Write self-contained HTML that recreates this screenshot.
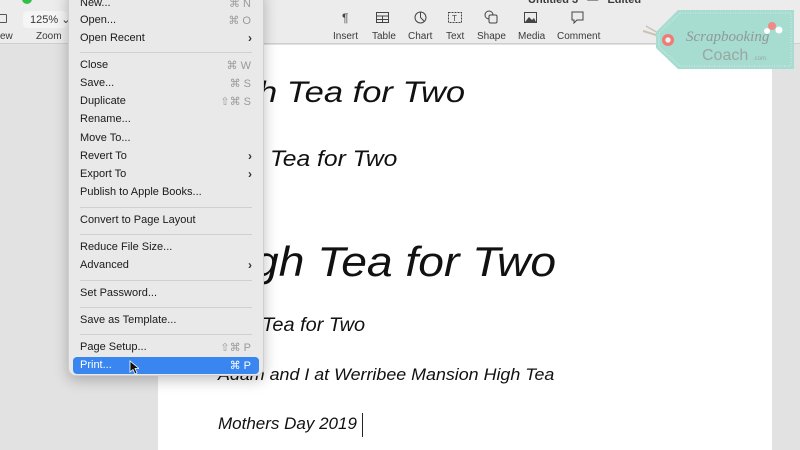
<!DOCTYPE html>
<html><head><meta charset="utf-8"><style>
*{margin:0;padding:0;box-sizing:border-box}
body{width:800px;height:450px;overflow:hidden;position:relative;background:#e2e2e2;font-family:"Liberation Sans",sans-serif}
.tb{position:absolute;left:0;top:0;width:800px;height:44px;background:#ececec;border-bottom:1px solid #cfcfcf}
.tl{position:absolute;font-size:10px;color:#3a3a3a}
.ic{position:absolute;font-size:12px;color:#444}
.page{position:absolute;left:158px;top:45px;width:614px;height:405px;background:#fff}
.hw{position:absolute;white-space:nowrap;font-style:italic;color:#111;transform-origin:left center;font-family:"Liberation Sans",sans-serif}
.menu{position:absolute;left:68px;top:-11px;width:196px;height:387px;background:#e9e9ea;border-radius:8px;box-shadow:0 4px 14px rgba(0,0,0,.25);border:1px solid #cfcfcf}
.it{position:absolute;left:11px;font-size:11px;color:#1a1a1a}
.sc{position:absolute;right:12px;font-size:11px;color:#9a9a9a}
.ar{position:absolute;right:11px;font-size:12px;color:#333;font-weight:bold}
.sep{position:absolute;left:11px;right:11px;height:1px;background:#d0d0d0}
.hl{position:absolute;left:4px;right:4px;top:367px;height:17px;background:#3a86f0;border-radius:4px}
</style></head><body>
<div class="tb">
<div style="position:absolute;left:22px;top:-6px;width:10px;height:10px;border-radius:50%;background:#30c048"></div>
<div style="position:absolute;left:-2px;top:14px;width:9px;height:9px;border:1px solid #555;border-radius:1px"></div>
<div style="position:absolute;left:23px;top:11px;width:44px;height:17px;background:#f5f5f5;border-radius:4px"></div>
<div class="tl" style="left:30px;top:13px;font-size:11px">125% ⌄</div>
<div class="tl" style="left:0;top:31px">ew</div>
<div class="tl" style="left:36px;top:31px">Zoom</div>
<div class="tl" style="left:528px;top:-6px;font-weight:bold;font-size:11px">Untitled 3 &nbsp; — &nbsp; Edited</div>
<div class="ic" style="left:342px;top:11px">¶</div><div class="tl" style="left:333px;top:31px">Insert</div>
<svg style="position:absolute;left:376px;top:12px" width="13" height="11"><rect x=".5" y=".5" width="12" height="10" fill="none" stroke="#444"/><line x1="0" y1="4" x2="13" y2="4" stroke="#444"/><line x1="0" y1="7.5" x2="13" y2="7.5" stroke="#444"/><line x1="6.5" y1="4" x2="6.5" y2="11" stroke="#444"/></svg><div class="tl" style="left:372px;top:31px">Table</div>
<svg style="position:absolute;left:414px;top:11px" width="13" height="13"><circle cx="6.5" cy="6.5" r="5.5" fill="none" stroke="#444"/><path d="M6.5 1V6.5L10 10" fill="none" stroke="#444"/></svg><div class="tl" style="left:408px;top:31px">Chart</div>
<svg style="position:absolute;left:448px;top:12px" width="14" height="11"><rect x=".5" y=".5" width="13" height="10" fill="none" stroke="#444" stroke-dasharray="2 1"/><text x="4" y="9" font-size="8" fill="#444" font-family="Liberation Sans">T</text></svg><div class="tl" style="left:446px;top:31px">Text</div>
<svg style="position:absolute;left:484px;top:10px" width="14" height="14"><circle cx="5" cy="5" r="4" fill="none" stroke="#444"/><rect x="5" y="5" width="8" height="8" rx="1.5" fill="#ececec" stroke="#444"/></svg><div class="tl" style="left:477px;top:31px">Shape</div>
<svg style="position:absolute;left:524px;top:12px" width="13" height="11"><rect x=".5" y=".5" width="12" height="10" fill="none" stroke="#444"/><path d="M1 10L5 5 8 8 10 6 12 10Z" fill="#444"/></svg><div class="tl" style="left:518px;top:31px">Media</div>
<svg style="position:absolute;left:571px;top:11px" width="13" height="13"><path d="M1 1H12V9H6L3 12V9H1Z" fill="none" stroke="#444"/></svg><div class="tl" style="left:557px;top:31px">Comment</div>
</div>
<div class="page">
<div class="hw" style="left:100px;top:31px;font-size:30px;transform:scaleX(1.15)">h Tea for Two</div>
<div class="hw" style="left:112px;top:101px;font-size:22px;transform:scaleX(1.12)">Tea for Two</div>
<div class="hw" style="left:95px;top:193px;font-size:42px;transform:scaleX(1.1)">gh Tea for Two</div>
<div class="hw" style="left:104px;top:270px;font-size:19px;transform:scaleX(1.05)">Tea for Two</div>
<div class="hw" style="left:60px;top:320px;font-size:17px;transform:scaleX(1.05)">Adam and I at Werribee Mansion High Tea</div>
<div class="hw" style="left:60px;top:369px;font-size:17px;transform:scaleX(1.0)">Mothers Day 2019</div>
<div style="position:absolute;left:204px;top:368px;width:1px;height:24px;background:#222"></div>
</div>
<svg style="position:absolute;left:640px;top:6px" width="158" height="68">
<path d="M3 25 Q14 28 24 32" stroke="#c9c3b5" stroke-width="2" fill="none"/>
<path d="M6 20 Q16 26 24 30" stroke="#c9c3b5" stroke-width="1.5" fill="none"/>
<path d="M38 4 H154 V63 H38 L16 42 V26 Z" fill="#a7dcd0"/>
<path d="M40 7 H151 V60 H40 L19 41 V27 Z" fill="none" stroke="#d4eee8" stroke-dasharray="1 1.5"/>
<circle cx="28" cy="34" r="6" fill="#f07a74"/><circle cx="28" cy="34" r="2.7" fill="#e7f2ef"/>
<text x="46" y="35" font-size="15" font-style="italic" fill="#8f9a97" font-family="Liberation Serif">Scrapbooking</text>
<text x="62" y="54" font-size="16" fill="#9aa6a3" font-family="Liberation Sans">Coach</text><text x="113" y="54" font-size="6" fill="#9aa6a3" font-family="Liberation Sans">.com</text>
<circle cx="132" cy="20" r="4" fill="#f08a84"/><circle cx="139" cy="24" r="3.5" fill="#fff"/><circle cx="127" cy="25" r="3" fill="#fff"/>
</svg>
<div class="menu">
<div class="it" style="top:7px">New...</div><div class="sc" style="top:7px">⌘ N</div>
<div class="it" style="top:24px">Open...</div><div class="sc" style="top:24px">⌘ O</div>
<div class="it" style="top:42px">Open Recent</div><div class="ar" style="top:41px">›</div>
<div class="sep" style="top:62px"></div>
<div class="it" style="top:69px">Close</div><div class="sc" style="top:69px">⌘ W</div>
<div class="it" style="top:87px">Save...</div><div class="sc" style="top:87px">⌘ S</div>
<div class="it" style="top:105px">Duplicate</div><div class="sc" style="top:105px">⇧⌘ S</div>
<div class="it" style="top:123px">Rename...</div>
<div class="it" style="top:142px">Move To...</div>
<div class="it" style="top:160px">Revert To</div><div class="ar" style="top:159px">›</div>
<div class="it" style="top:178px">Export To</div><div class="ar" style="top:177px">›</div>
<div class="it" style="top:196px">Publish to Apple Books...</div>
<div class="sep" style="top:217px"></div>
<div class="it" style="top:224px">Convert to Page Layout</div>
<div class="sep" style="top:244px"></div>
<div class="it" style="top:251px">Reduce File Size...</div>
<div class="it" style="top:269px">Advanced</div><div class="ar" style="top:268px">›</div>
<div class="sep" style="top:290px"></div>
<div class="it" style="top:297px">Set Password...</div>
<div class="sep" style="top:317px"></div>
<div class="it" style="top:324px">Save as Template...</div>
<div class="sep" style="top:344px"></div>
<div class="it" style="top:351px">Page Setup...</div><div class="sc" style="top:351px">⇧⌘ P</div>
<div class="hl"></div>
<div class="it" style="top:369px;color:#fff">Print...</div><div class="sc" style="top:369px;color:#fff">⌘ P</div>
</div>
<svg style="position:absolute;left:129px;top:360px" width="10" height="15"><path d="M1 1V12L4 9.5 6 14 8 13 6 8.5H10Z" fill="#111" stroke="#fff" stroke-width=".8"/></svg>
</body></html>
